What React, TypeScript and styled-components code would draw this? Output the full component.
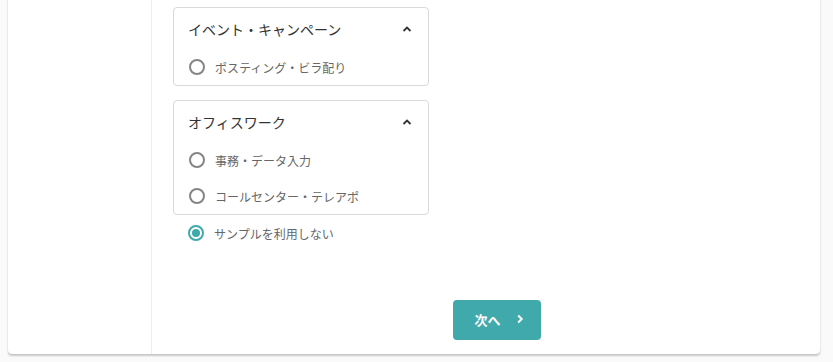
import React from "react";
import styled, { createGlobalStyle } from "styled-components";

const Global = createGlobalStyle`
  html, body { margin: 0; padding: 0; background: #fafafa; }
  body { font-family: "Noto Sans CJK JP", "Noto Sans", sans-serif; overflow: hidden; }
`;

const Page = styled.div`
  padding: 0 13px 8px 8px;
  height: 362px;
  box-sizing: border-box;
  display: flex;
  flex-direction: column;
  justify-content: flex-end;
`;

const Card = styled.div`
  display: flex;
  flex-shrink: 0;
  height: 364px;
  background: #fff;
  border-radius: 4px;
  box-shadow: 0 2px 2px rgba(0, 0, 0, 0.2), 0 0 1px rgba(0, 0, 0, 0.14);
`;

const Sidebar = styled.div`
  width: 143px;
  border-right: 1px solid #eeeeee;
  flex-shrink: 0;
`;

const Main = styled.div`
  flex: 1;
  padding: 17px 0 0 21px;
  display: flex;
  flex-direction: column;
`;

const Group = styled.div<{ $last?: boolean }>`
  width: 254px;
  border: 1px solid #d9d9d9;
  border-radius: 4px;
  margin-bottom: ${(p) => (p.$last ? "0" : "14px")};
`;

const GroupHeader = styled.div`
  height: 41px;
  display: flex;
  align-items: center;
  justify-content: space-between;
  padding: 0 16px 0 14px;
  font-size: 14px;
  color: #333;
`;

const Option = styled.label`
  height: 36px;
  display: flex;
  align-items: center;
  gap: 10px;
  padding-left: 15px;
  font-size: 12px;
  color: #666;
`;

const Radio = styled.span<{ $checked?: boolean }>`
  width: 16px;
  height: 16px;
  box-sizing: border-box;
  border-radius: 50%;
  border: 2px solid ${(p) => (p.$checked ? "#3fa9ac" : "#858585")};
  display: flex;
  align-items: center;
  justify-content: center;
  &::after {
    content: "";
    width: 8px;
    height: 8px;
    border-radius: 50%;
    background: ${(p) => (p.$checked ? "#3fa9ac" : "transparent")};
  }
`;

const Footer = styled.div`
  padding: 49px 0 0 280px;
`;

const NextButton = styled.button`
  width: 88px;
  height: 40px;
  border: none;
  border-radius: 4px;
  background: #3fa9ac;
  color: #fff;
  font-family: inherit;
  font-size: 13px;
  font-weight: 700;
  display: flex;
  align-items: center;
  justify-content: center;
  gap: 15px;
  padding: 0 0 2px 4px;
`;

const ChevronUp = () => (
  <svg width="10" height="8" viewBox="0 0 10 8">
    <path d="M1.5 6 L5 2.5 L8.5 6" fill="none" stroke="#333" strokeWidth="1.8" />
  </svg>
);

const ChevronRight = () => (
  <svg width="8" height="12" viewBox="0 0 8 12">
    <path d="M2.2 2.5 L5.7 6 L2.2 9.5" fill="none" stroke="#fff" strokeWidth="2" />
  </svg>
);

const groups = [
  { title: "イベント・キャンペーン", items: ["ポスティング・ビラ配り"] },
  { title: "オフィスワーク", items: ["事務・データ入力", "コールセンター・テレアポ"] },
];

export default function App() {
  return (
    <>
      <Global />
      <Page>
        <Card>
          <Sidebar />
          <Main>
            {groups.map((g, i) => (
              <Group key={g.title} $last={i === groups.length - 1}>
                <GroupHeader>
                  <span>{g.title}</span>
                  <ChevronUp />
                </GroupHeader>
                {g.items.map((it) => (
                  <Option key={it}>
                    <Radio />
                    <span>{it}</span>
                  </Option>
                ))}
              </Group>
            ))}
            <Option>
              <Radio $checked />
              <span>サンプルを利用しない</span>
            </Option>
            <Footer>
              <NextButton>
                <span>次へ</span>
                <ChevronRight />
              </NextButton>
            </Footer>
          </Main>
        </Card>
      </Page>
    </>
  );
}
